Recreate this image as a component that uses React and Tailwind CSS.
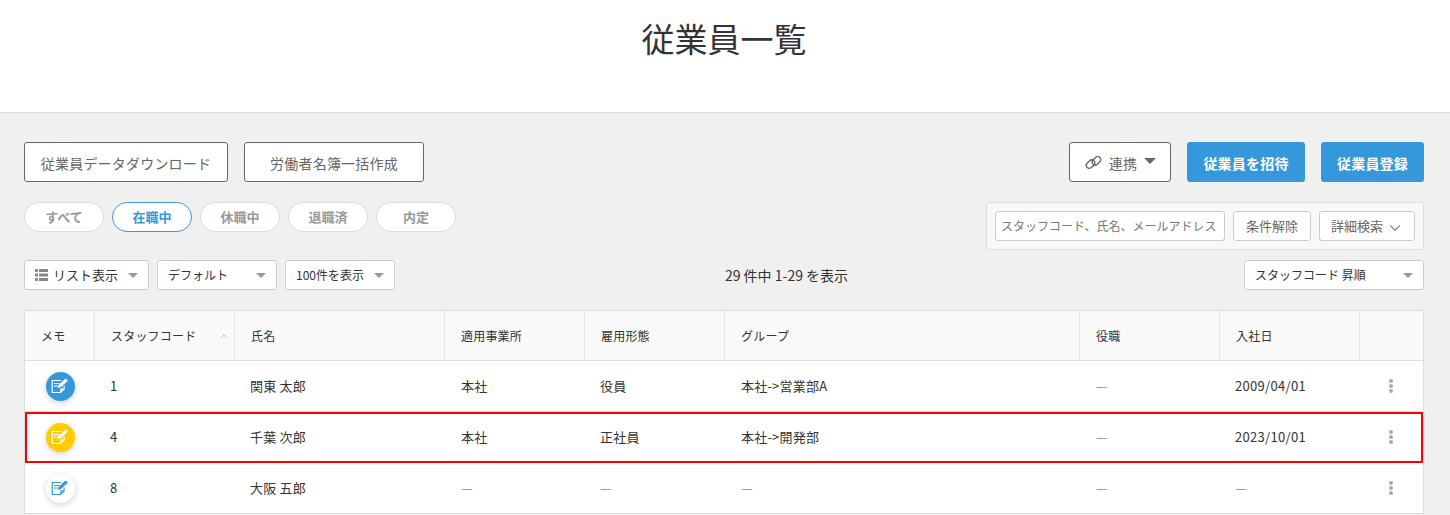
import React from "react";
import { ChevronDown, ChevronUp } from "lucide-react";

const FONT = "font-['Noto_Sans_CJK_JP','Noto_Sans',sans-serif]";
const GRID = "grid grid-cols-[70px_140px_210px_140px_140px_355px_140px_140px_1fr]";

const headers = ["メモ", "スタッフコード", "氏名", "適用事業所", "雇用形態", "グループ", "役職", "入社日", ""];

const rows = [
  { memo: "blue", code: "1", name: "関東 太郎", office: "本社", type: "役員", group: "本社->営業部A", role: "—", date: "2009/04/01" },
  { memo: "yellow", code: "4", name: "千葉 次郎", office: "本社", type: "正社員", group: "本社->開発部", role: "—", date: "2023/10/01", marked: true },
  { memo: "white", code: "8", name: "大阪 五郎", office: "—", type: "—", group: "—", role: "—", date: "—" },
];

function Caret() {
  return <span className="w-0 h-0 border-x-[5px] border-x-transparent border-t-[5px] border-t-[#999]" />;
}

function OutlineButton({ children, className }) {
  return (
    <button className={`h-10 flex items-center justify-center pt-[1px] bg-white border border-[#666] rounded-[3px] text-sm tracking-[0.2px] text-[#666] ${className}`}>
      {children}
    </button>
  );
}

function Select({ children, className }) {
  return (
    <div className={`h-[30px] flex items-center justify-between bg-white border border-[#ccc] rounded-[3px] text-xs text-[#333] pl-[10px] pr-[10px] ${className}`}>
      {children}
    </div>
  );
}

function MemoIcon({ color }) {
  const bg = color === "blue" ? "bg-[#3498db]" : color === "yellow" ? "bg-[#ffcc00]" : "bg-white";
  const ink = color === "white" ? "#3498db" : "#ffffff";
  return (
    <div className={`w-[29px] h-[29px] rounded-full flex items-center justify-center shadow-[0_2px_6px_rgba(0,0,0,0.18)] ${bg}`}>
      <svg width="18" height="18" viewBox="0 0 18 18" fill="none">
        <path d="M10 3.5H1.2v12h8.3l3.6-3.6V8.5" stroke={ink} strokeWidth="1.2" />
        <path d="M3 6.5h5.5M3 9h3.5" stroke={ink} strokeWidth="1.2" />
        <path d="M6.5 11l1-3L14.5 1.5 17 3.5 10 10z" fill={ink} />
        <path d="M9 15.5v-4.2h4.2z" fill={ink} opacity="0.75" />
      </svg>
    </div>
  );
}

function Row({ row }) {
  const dash = (v) => (v === "—" ? "text-[#888]" : "text-[#333]");
  return (
    <div className={`${GRID} h-[51px] items-center bg-white border-b border-[#ddd] text-[13px] tracking-[0.2px] ${row.marked ? "outline-2 -outline-offset-2 outline-[#f00]" : ""}`}>
      <div className="flex justify-center">
        <MemoIcon color={row.memo} />
      </div>
      <div className="pl-[15px] text-[#333]">{row.code}</div>
      <div className="pl-[15px] text-[#333]">{row.name}</div>
      <div className={`pl-4 ${dash(row.office)}`}>{row.office}</div>
      <div className={`pl-[15px] ${dash(row.type)}`}>{row.type}</div>
      <div className={`pl-4 ${dash(row.group)}`}>{row.group}</div>
      <div className={`pl-4 ${dash(row.role)}`}>{row.role}</div>
      <div className={`pl-[15px] tracking-[0.3px] ${dash(row.date)}`}>{row.date}</div>
      <div className="flex flex-col items-center gap-[1px] pr-[2px]">
        <span className="w-1 h-1 rounded-full bg-[#a8a8a8]" />
        <span className="w-1 h-1 rounded-full bg-[#a8a8a8]" />
        <span className="w-1 h-1 rounded-full bg-[#a8a8a8]" />
      </div>
    </div>
  );
}

export default function App() {
  const tabs = ["すべて", "在職中", "休職中", "退職済", "内定"];

  return (
    <div className={`${FONT} w-[1450px] h-[515px] overflow-hidden bg-[#f0f0f0]`}>
      <header className="h-[113px] bg-white border-b border-[#ddd] pt-[14px] pr-[2px]">
        <h1 className="text-[33px] leading-[48px] text-center text-[#333]">従業員一覧</h1>
      </header>

      <main className="pl-6 pr-[26px] pt-[29px]">
        <div className="flex justify-between">
          <div className="flex gap-4">
            <OutlineButton className="w-[204px]">従業員データダウンロード</OutlineButton>
            <OutlineButton className="w-[180px]">労働者名簿一括作成</OutlineButton>
          </div>
          <div className="flex gap-4">
            <OutlineButton className="w-[102px] gap-[7px]">
              <svg width="17" height="17" viewBox="0 0 17 17" fill="none" stroke="#666" strokeWidth="1.3" className="ml-[1px]">
                <rect x="0.8" y="7.2" width="9.5" height="6" rx="3" transform="rotate(-45 5.5 10.2)" />
                <rect x="6.7" y="3.8" width="9.5" height="6" rx="3" transform="rotate(-45 11.5 6.8)" />
              </svg>
              <span>連携</span>
              <span className="w-0 h-0 -mt-1 border-x-[6px] border-x-transparent border-t-[6px] border-t-[#666]" />
            </OutlineButton>
            <button className="w-[118px] h-10 pt-[1px] bg-[#3498db] rounded-[3px] text-sm tracking-[0.2px] font-bold text-white">従業員を招待</button>
            <button className="w-[103px] h-10 pt-[1px] bg-[#3498db] rounded-[3px] text-sm tracking-[0.2px] font-bold text-white">従業員登録</button>
          </div>
        </div>

        <div className="flex justify-between items-start mt-5">
          <div className="flex gap-2">
            {tabs.map((tab) => (
              <div
                key={tab}
                className={`w-20 h-[30px] flex items-center justify-center rounded-full bg-white border text-[13px] font-bold ${tab === "在職中" ? "border-[#3498db] text-[#3498db]" : "border-[#ddd] text-[#999]"}`}
              >
                {tab}
              </div>
            ))}
          </div>
          <div className="w-[438px] h-12 flex items-center gap-2 px-2 bg-[#f8f8f8] border border-[#ddd] rounded-[3px]">
            <div className="w-[230px] h-[30px] flex items-center px-[5px] bg-white border border-[#ccc] rounded-[3px] text-xs text-[#777] whitespace-nowrap">
              スタッフコード、氏名、メールアドレス
            </div>
            <div className="w-[78px] h-[30px] flex items-center justify-center bg-white border border-[#ccc] rounded-[3px] text-[13px] text-[#666]">条件解除</div>
            <div className="w-[96px] h-[30px] flex items-center justify-center gap-[3px] pl-[1px] bg-white border border-[#ccc] rounded-[3px] text-[13px] text-[#666]">
              詳細検索
              <ChevronDown size={18} strokeWidth={1.5} className="text-[#888] mt-[3px]" />
            </div>
          </div>
        </div>

        <div className="flex justify-between items-center mt-[9px] mb-[19px] h-[32px]">
          <div className="flex gap-2">
            <Select className="w-[125px]">
              <span className="flex items-center gap-[5px] text-[13px]">
                <svg width="13" height="12" viewBox="0 0 13 12" fill="#888">
                  <path d="M0 0h3v3H0zM4 0h9v3H4zM0 4.5h3v3H0zM4 4.5h9v3H4zM0 9h3v3H0zM4 9h9v3H4z" />
                </svg>
                リスト表示
              </span>
              <Caret />
            </Select>
            <Select className="w-[120px]">
              デフォルト
              <Caret />
            </Select>
            <Select className="w-[110px]">
              100件を表示
              <Caret />
            </Select>
          </div>
          <div className="pr-[66px] text-center text-sm text-[#333] whitespace-nowrap">29 件中 1-29 を表示</div>
          <Select className="w-[180px]">
            スタッフコード 昇順
            <Caret />
          </Select>
        </div>

        <div className="border-x border-t border-[#ddd]">
          <div className={`${GRID} h-[50px] items-stretch bg-[#f9f9f9] border-b border-[#ddd] text-xs tracking-[0.2px] text-[#333]`}>
            {headers.map((label, i) => (
              <div key={i} className={`relative flex items-center pl-4 ${i < 8 ? "border-r border-[#e5e5e5]" : ""}`}>
                {label}
                {i === 1 && <ChevronUp size={10} className="absolute right-[5px] text-[#aaa]" />}
              </div>
            ))}
          </div>
          {rows.map((row) => (
            <Row key={row.code} row={row} />
          ))}
        </div>
      </main>
    </div>
  );
}
